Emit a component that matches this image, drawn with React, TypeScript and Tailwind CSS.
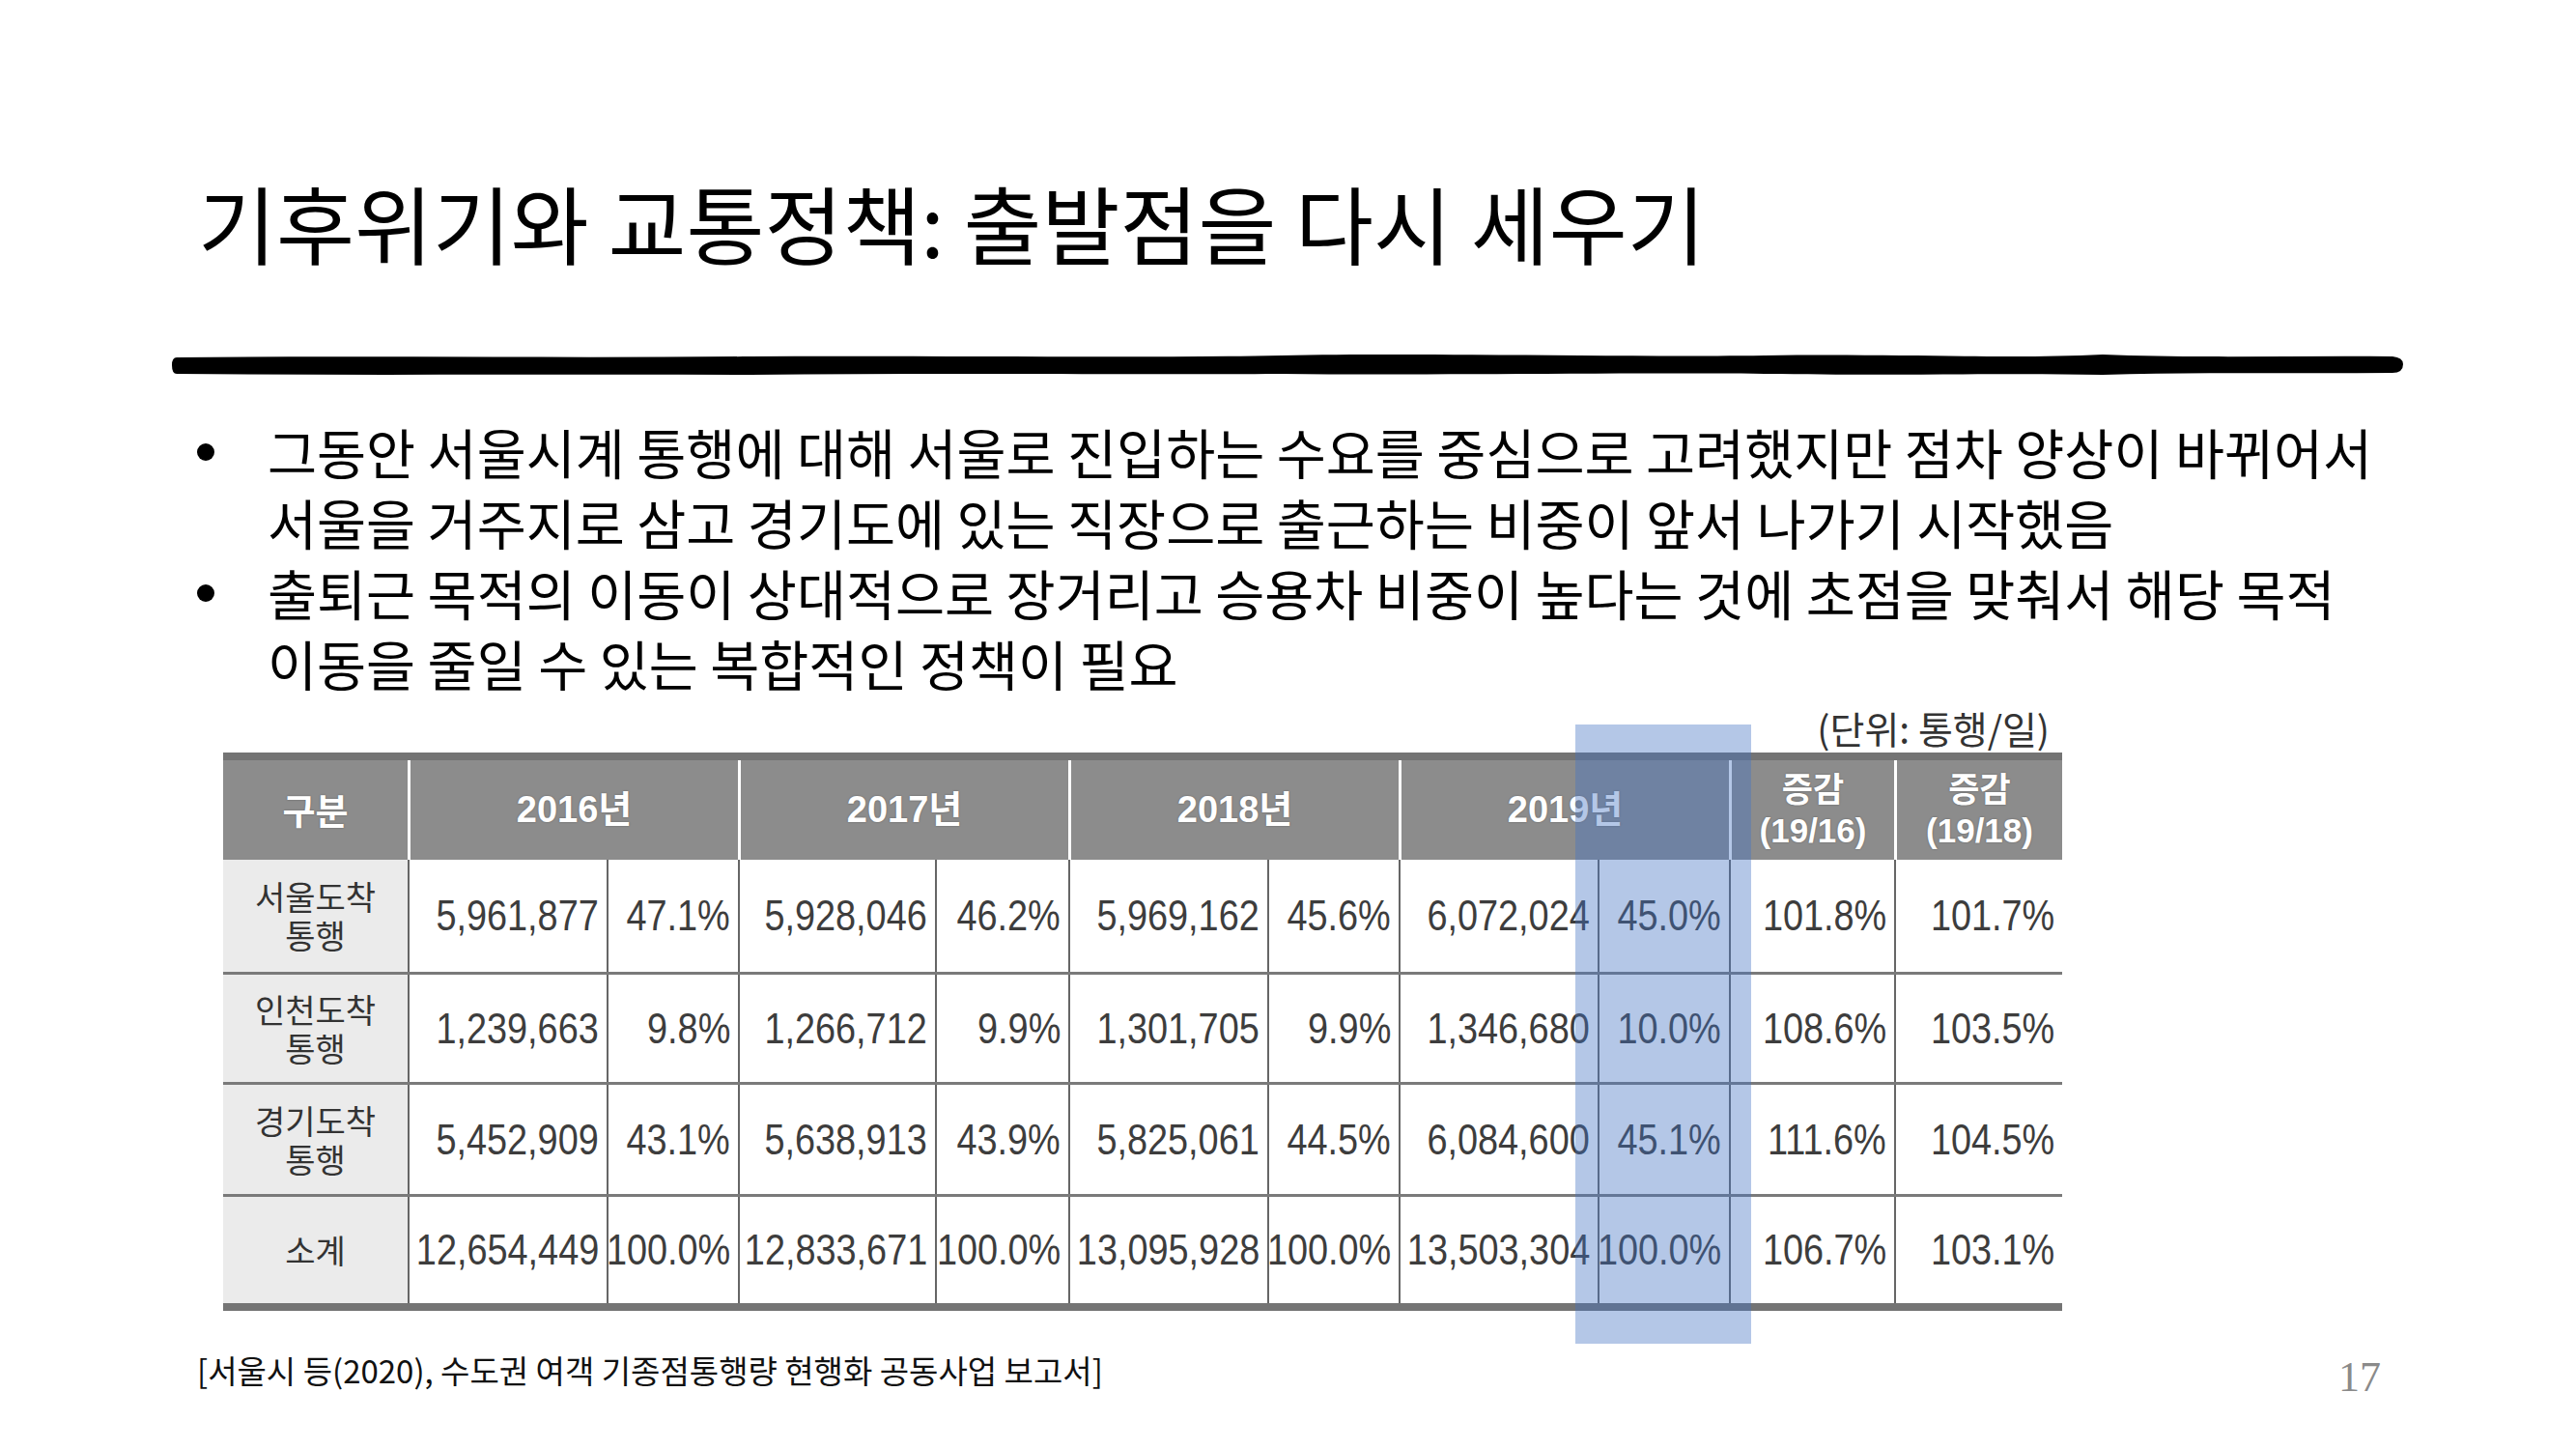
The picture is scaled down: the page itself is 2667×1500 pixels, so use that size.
import React from "react";

const bodyW = [
  "w-[191px]",
  "w-[206px]",
  "w-[136px]",
  "w-[204px]",
  "w-[138px]",
  "w-[206px]",
  "w-[136px]",
  "w-[206px]",
  "w-[136px]",
  "w-[171px]",
  "w-[174px]",
];

const rowH = [
  "h-[116px]",
  "h-[114px] border-t-[3px] border-[#7a7a7a]",
  "h-[116px] border-t-[3px] border-[#7a7a7a]",
  "h-[113px] border-t-[3px] border-[#7a7a7a]",
];

const rows: { label: string; vals: string[] }[] = [
  {
    label: "서울도착\n통행",
    vals: ["5,961,877", "47.1%", "5,928,046", "46.2%", "5,969,162", "45.6%", "6,072,024", "45.0%", "101.8%", "101.7%"],
  },
  {
    label: "인천도착\n통행",
    vals: ["1,239,663", "9.8%", "1,266,712", "9.9%", "1,301,705", "9.9%", "1,346,680", "10.0%", "108.6%", "103.5%"],
  },
  {
    label: "경기도착\n통행",
    vals: ["5,452,909", "43.1%", "5,638,913", "43.9%", "5,825,061", "44.5%", "6,084,600", "45.1%", "111.6%", "104.5%"],
  },
  {
    label: "소계",
    vals: ["12,654,449", "100.0%", "12,833,671", "100.0%", "13,095,928", "100.0%", "13,503,304", "100.0%", "106.7%", "103.1%"],
  },
];

function BrushLine() {
  return (
    <svg width="2312" height="26" viewBox="0 0 2312 26" className="block">
      <path
        d="M 6 5 C 200 3, 400 6, 600 4 C 800 3, 1000 6, 1150 3 C 1300 0, 1500 5, 1650 3 C 1800 1, 1900 7, 2000 2 C 2100 6, 2200 3, 2300 4 Q 2311 5, 2311 12 Q 2311 21, 2300 21 C 2200 22, 2100 20, 2000 23 C 1900 21, 1800 24, 1650 22 C 1500 20, 1300 24, 1150 22 C 1000 23, 800 21, 600 23 C 400 22, 200 24, 6 22 Q 1 22, 1 13 Q 1 5, 6 5 Z"
        fill="#000"
      />
    </svg>
  );
}

export default function App() {
  const kr = "font-['Noto_Sans_CJK_KR','Noto_Sans',sans-serif]";
  const num = "font-['Liberation_Sans','Noto_Sans_CJK_KR',sans-serif]";
  return (
    <div className={`w-[2667px] h-[1500px] bg-white overflow-hidden flex flex-col ${kr} text-[#111]`}>
      {/* Title */}
      <div className="pl-[205px] pt-[179px] h-[279px] text-[88px] leading-[100px] whitespace-nowrap text-black">
        기후위기와 교통정책: 출발점을 다시 세우기
      </div>

      {/* Brush underline */}
      <div className="ml-[177px] mt-[86px]">
        <BrushLine />
      </div>

      {/* Bullets */}
      <div className="ml-[204px] mt-[40px] flex flex-col text-[55.5px] leading-[73px] text-black">
        <div className="flex">
          <div className="w-[73px] h-[73px] flex items-center">
            <span className="block w-[18px] h-[18px] rounded-full bg-black" />
          </div>
          <div className="whitespace-nowrap">
            <div>그동안 서울시계 통행에 대해 서울로 진입하는 수요를 중심으로 고려했지만 점차 양상이 바뀌어서</div>
            <div>서울을 거주지로 삼고 경기도에 있는 직장으로 출근하는 비중이 앞서 나가기 시작했음</div>
          </div>
        </div>
        <div className="flex">
          <div className="w-[73px] h-[73px] flex items-center">
            <span className="block w-[18px] h-[18px] rounded-full bg-black" />
          </div>
          <div className="whitespace-nowrap">
            <div>출퇴근 목적의 이동이 상대적으로 장거리고 승용차 비중이 높다는 것에 초점을 맞춰서 해당 목적</div>
            <div>이동을 줄일 수 있는 복합적인 정책이 필요</div>
          </div>
        </div>
      </div>

      {/* Table block */}
      <div className="ml-[231px] w-[1904px] mt-[10px] relative">
        <div className="flex justify-end pr-[13px] h-[46px] items-start">
          <span className="text-[39px] leading-[40px] text-[#333]">(단위: 통행/일)</span>
        </div>

        <div className="border-t-[8px] border-b-[8px] border-[#747474]">
          {/* Header */}
          <div className="flex h-[103px] bg-[#8c8c8c] text-white font-bold [text-shadow:0_0_2px_rgba(0,0,0,0.35)]">
            <div className="w-[191px] flex items-center justify-center text-[37px]">구분</div>
            <div className={`w-[342px] border-l-[3px] border-white flex items-center justify-center text-[38px] ${num}`}>2016년</div>
            <div className={`w-[342px] border-l-[3px] border-white flex items-center justify-center text-[38px] ${num}`}>2017년</div>
            <div className={`w-[342px] border-l-[3px] border-white flex items-center justify-center text-[38px] ${num}`}>2018년</div>
            <div className={`w-[342px] border-l-[3px] border-white flex items-center justify-center text-[38px] ${num}`}>2019년</div>
            <div className={`w-[171px] border-l-[3px] border-white flex items-center justify-center text-center whitespace-pre-line text-[35px] leading-[42px] ${num}`}>
              {"증감\n(19/16)"}
            </div>
            <div className={`w-[174px] border-l-[3px] border-white flex items-center justify-center text-center whitespace-pre-line text-[35px] leading-[42px] ${num}`}>
              {"증감\n(19/18)"}
            </div>
          </div>

          {/* Body */}
          {rows.map((r, ri) => (
            <div key={ri} className={`flex ${rowH[ri]}`}>
              <div className={`${bodyW[0]} bg-[#ebebeb] flex items-center justify-center text-center whitespace-pre-line text-[34px] leading-[40px] text-[#333]`}>
                {r.label}
              </div>
              {r.vals.map((v, vi) => (
                <div
                  key={vi}
                  className={`${bodyW[vi + 1]} border-l-2 border-[#666] flex items-center justify-end pr-[8px] text-[44px] text-[#3d3d3d] ${num}`}
                >
                  <span className="inline-block scale-x-[0.86] origin-right whitespace-nowrap">{v}</span>
                </div>
              ))}
            </div>
          ))}
        </div>

        {/* Blue highlight overlay */}
        <div className="absolute left-[1400px] top-[17px] w-[182px] h-[641px] bg-[rgba(68,114,196,0.4)] pointer-events-none" />
      </div>

      {/* Footer */}
      <div className="flex justify-between items-start pl-[204px] pr-[202px] mt-[41px]">
        <span className="text-[33px] leading-[40px] text-[#111] whitespace-nowrap">
          [서울시 등(2020), 수도권 여객 기종점통행량 현행화 공동사업 보고서]
        </span>
        <span className="font-['Liberation_Serif',serif] text-[44px] leading-[48px] text-[#8a8a8a] mt-[4px]">17</span>
      </div>
    </div>
  );
}
